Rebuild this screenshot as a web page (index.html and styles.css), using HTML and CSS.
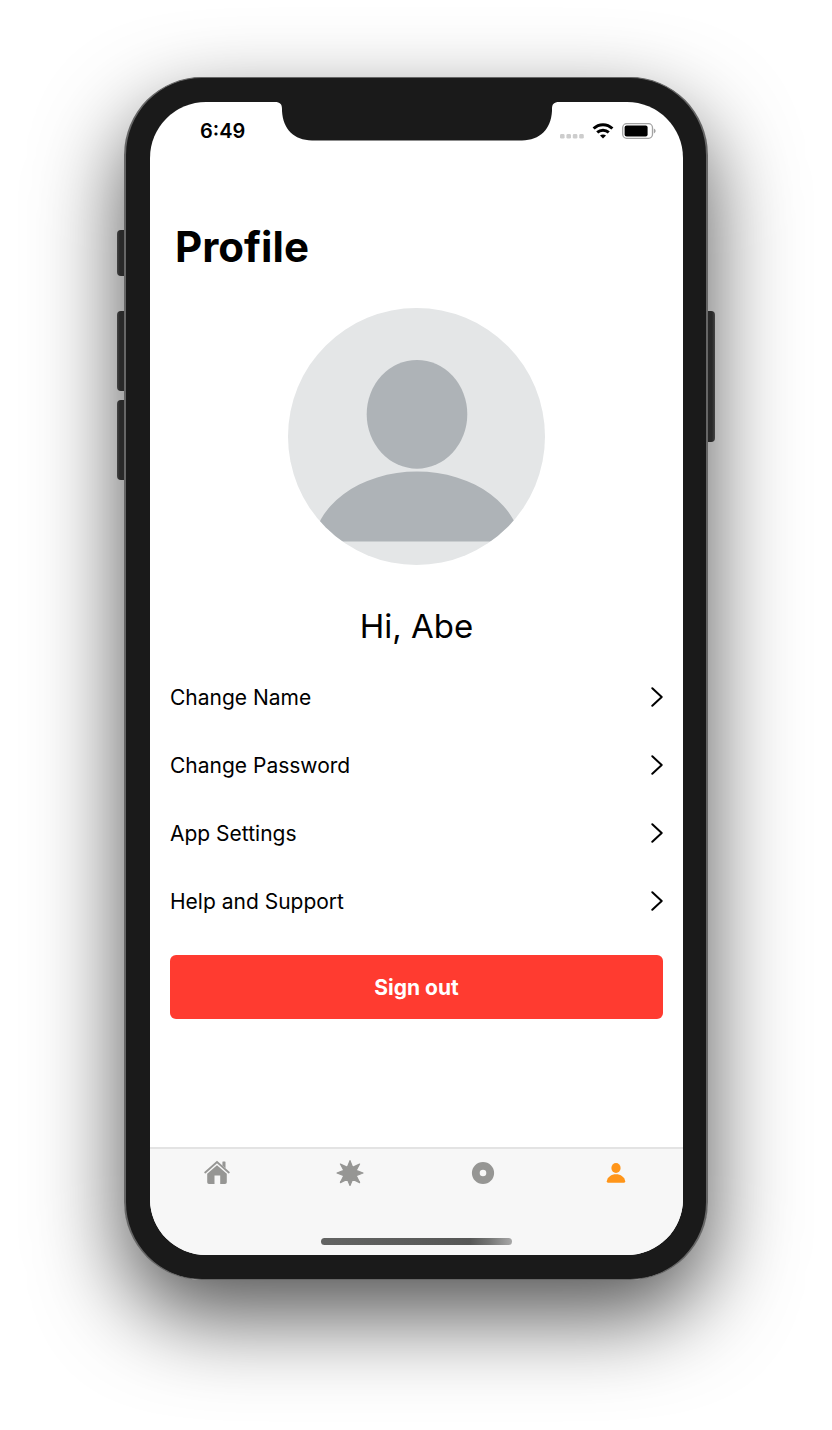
FILE: index.html
```html
<!DOCTYPE html>
<html lang="en">
<head>
<meta charset="utf-8">
<meta name="viewport" content="width=device-width, initial-scale=1">
<title>Profile</title>
<link rel="stylesheet" href="styles.css">
</head>
<body>
<div class="phone">
  <span class="key key-silent"></span>
  <span class="key key-up"></span>
  <span class="key key-down"></span>
  <span class="key key-power"></span>
  <div class="bezel">
    <div class="screen">
      <svg class="notch" viewBox="0 0 284 39" width="284" height="39" aria-hidden="true">
        <path fill="#1a1a1a" d="M0 0C5 0 7 2 7 7V9C8 27 19 38.4 37 38.4H247C265 38.4 276 27 277 9V7C277 2 279 0 284 0Z"/>
      </svg>
      <header class="status">
        <time class="clock">6:49</time>
        <div class="indicators">
          <svg viewBox="0 0 24 5" width="24" height="5" class="signal" aria-hidden="true">
            <g fill="#cdcdcd"><rect width="4.6" height="4.6" rx="1.4"/><rect x="6.4" width="4.6" height="4.6" rx="1.4"/><rect x="12.8" width="4.6" height="4.6" rx="1.4"/><rect x="19.2" width="4.6" height="4.6" rx="1.4"/></g>
          </svg>
          <svg viewBox="0 0 22 16" width="22" height="16" aria-hidden="true">
            <g fill="none" stroke="#000" stroke-width="3"><path d="M1.6 5.5C7 .4 15 .4 20.4 5.5"/><path d="M5.2 9.4C8.5 6.5 13.5 6.5 16.8 9.4"/></g>
            <path d="M11 15.6L8 12.5C9.8 11.1 12.2 11.1 14 12.5Z"/>
          </svg>
          <svg viewBox="0 0 34 16" width="34" height="16" aria-hidden="true">
            <rect x=".7" y=".7" width="29.8" height="14.6" rx="4" fill="none" stroke="#a3a3a3" stroke-width="1.3"/>
            <rect x="2.6" y="2.6" width="23" height="10.8" rx="2"/>
            <path fill="#a3a3a3" d="M31.8 5.6C34.2 6.6 34.2 9.4 31.8 10.4Z"/>
          </svg>
        </div>
      </header>
      <main class="content">
        <h1 class="title">Profile</h1>
        <svg class="avatar" viewBox="0 0 257 257" role="img" aria-label="Profile picture">
          <defs><clipPath id="round"><circle cx="128.5" cy="128.5" r="128.5"/></clipPath></defs>
          <g clip-path="url(#round)">
            <path fill="#e4e6e7" d="M0 0H257V257H0Z"/>
            <ellipse cx="129" cy="106.3" rx="50.3" ry="54.4" fill="#aeb3b7"/>
            <path fill="#aeb3b7" d="M25 233.4V241A104 77.5 0 0 1 233 241V233.4Z"/>
          </g>
        </svg>
        <p class="greeting">Hi, Abe</p>
        <nav class="menu" aria-label="Profile options">
          <a class="row" href="#name">Change Name<svg class="chevron" viewBox="0 0 12 20" width="12" height="20"><path d="M1.3 1.3L10.7 10L1.3 18.7"/></svg></a>
          <a class="row" href="#password">Change Password<svg class="chevron" viewBox="0 0 12 20" width="12" height="20"><path d="M1.3 1.3L10.7 10L1.3 18.7"/></svg></a>
          <a class="row" href="#settings">App Settings<svg class="chevron" viewBox="0 0 12 20" width="12" height="20"><path d="M1.3 1.3L10.7 10L1.3 18.7"/></svg></a>
          <a class="row" href="#help">Help and Support<svg class="chevron" viewBox="0 0 12 20" width="12" height="20"><path d="M1.3 1.3L10.7 10L1.3 18.7"/></svg></a>
        </nav>
        <button class="signout" type="button">Sign out</button>
      </main>
      <footer class="bottom">
        <nav class="tabs" aria-label="Main">
          <a class="tab" href="#home" aria-label="Home">
            <svg viewBox="0 0 26 26" width="26" height="26">
              <path d="M1.2 12.5L13 2L24.8 12.5" fill="none" stroke="currentColor" stroke-width="1.8" stroke-linecap="round"/>
              <path fill="currentColor" d="M18.4 2.1Q18.4 1.5 19 1.5H20.9Q21.5 1.5 21.5 2.1V8.2L18.4 5.4Z"/>
              <path fill="currentColor" d="M13 5.2L22.8 13.8V22.3Q22.8 24.1 21 24.1H16.2V15.5H10.5V24.1H5Q3.2 24.1 3.2 22.3V13.8Z"/>
            </svg>
          </a>
          <a class="tab" href="#explore" aria-label="Explore">
            <svg viewBox="0 0 28 28" width="28" height="28">
              <path fill="currentColor" stroke="currentColor" stroke-width="1.2" stroke-linejoin="round" d="M14 1.6L16.6 8.2L23.6 5L20.1 11.4L27 14L20.1 16.6L23.6 23.6L16.6 20.2L14 26.4L11.4 20.2L4.4 23.6L7.9 16.6L1 14L7.9 11.4L4.4 5L11.4 8.2Z"/>
            </svg>
          </a>
          <a class="tab" href="#record" aria-label="Record">
            <svg viewBox="0 0 24 24" width="24" height="24">
              <circle cx="12" cy="12" r="7.2" fill="none" stroke="currentColor" stroke-width="7.8"/>
            </svg>
          </a>
          <a class="tab tab-active" href="#profile" aria-label="Profile" aria-current="page">
            <svg viewBox="0 0 20 22" width="20" height="22">
              <ellipse cx="10" cy="6" rx="4.6" ry="4.9" fill="currentColor"/>
              <path fill="currentColor" d="M2 20.7Q.6 20.7 .8 19.3C1.5 15 5.3 12.3 10 12.3S18.5 15 19.2 19.3Q19.4 20.7 18 20.7Z"/>
            </svg>
          </a>
        </nav>
        <span class="home-bar"></span>
      </footer>
    </div>
  </div>
</div>
</body>
</html>
```
FILE: styles.css
```css
* {
  box-sizing: border-box;
}

body {
  display: flex;
  min-height: 100vh;
  margin: 0;
  padding: 77px 124px 150px;
  background: #fff;
  color: #000;
  font-family: Inter, "Liberation Sans", sans-serif;
}

.phone {
  position: relative;
  display: flex;
  flex: 1;
  border-radius: 80px;
  box-shadow: 0 36px 88px rgba(0, 0, 0, 0.68);
}

.key {
  position: absolute;
  left: -7px;
  width: 12px;
  border-radius: 4px;
  background: linear-gradient(90deg, #444, #292929 3px);
}

.key-silent {
  top: 153px;
  height: 46px;
}

.key-up {
  top: 234px;
  height: 80px;
}

.key-down {
  top: 323px;
  height: 80px;
}

.key-power {
  top: 234px;
  right: -7px;
  left: auto;
  height: 131px;
  background: linear-gradient(270deg, #444, #292929 3px);
}

.bezel {
  position: relative;
  display: flex;
  flex: 1;
  padding: 24px 23px 24px 24px;
  border: 2px solid #666;
  border-top-width: 1px;
  border-bottom-width: 1px;
  border-radius: 78px;
  background: #1a1a1a;
}

.screen {
  position: relative;
  display: flex;
  flex: 1;
  flex-direction: column;
  overflow: hidden;
  border-radius: 56px;
  background: #fff;
}

.notch {
  position: absolute;
  top: 0;
  left: 50%;
  transform: translateX(-50%);
}

.status {
  display: flex;
  align-items: center;
  justify-content: space-between;
  height: 58px;
  padding: 0 27px 0 50px;
}

.clock {
  font-size: 20px;
  font-weight: 600;
}

.indicators {
  display: flex;
  align-items: center;
  gap: 8px;
}

.signal {
  align-self: flex-end;
}

.content {
  display: flex;
  flex: 1;
  flex-direction: column;
  align-items: stretch;
  padding: 60px 20px 40px;
}

.title {
  margin: 0 0 34px;
  padding: 0 5px;
  font-size: 42px;
  line-height: 54px;
}

.avatar {
  align-self: center;
  width: 257px;
  height: 257px;
}

.greeting {
  margin: 38px 0 14px;
  font-size: 33px;
  line-height: 46px;
  text-align: center;
}

.menu {
  display: flex;
  flex-direction: column;
}

.row {
  display: flex;
  align-items: center;
  justify-content: space-between;
  height: 68px;
  color: inherit;
  font-size: 21px;
  text-decoration: none;
}

.chevron {
  fill: none;
  stroke: #000;
  stroke-width: 2;
  stroke-linecap: round;
  stroke-linejoin: round;
}

.signout {
  height: 64px;
  margin-top: 20px;
  border: 0;
  border-radius: 6px;
  background: #ff3b30;
  color: #fff;
  font: 700 21px Inter, "Liberation Sans", sans-serif;
}

.bottom {
  display: flex;
  flex-direction: column;
  align-items: center;
  justify-content: space-between;
  height: 108px;
  padding-bottom: 10px;
  border-top: 2px solid #e3e3e3;
  background: #f7f7f7;
}

.tabs {
  display: grid;
  grid-template-columns: repeat(4, 1fr);
  width: 100%;
}

.tab {
  display: flex;
  align-items: center;
  justify-content: center;
  height: 47px;
  color: #969694;
}

.tab-active {
  color: #ff9519;
}

.home-bar {
  width: 191px;
  height: 7px;
  border-radius: 4px;
  background: linear-gradient(90deg, #636463, #565756 78%, #747574 88%, #a8a8a8);
}
```
